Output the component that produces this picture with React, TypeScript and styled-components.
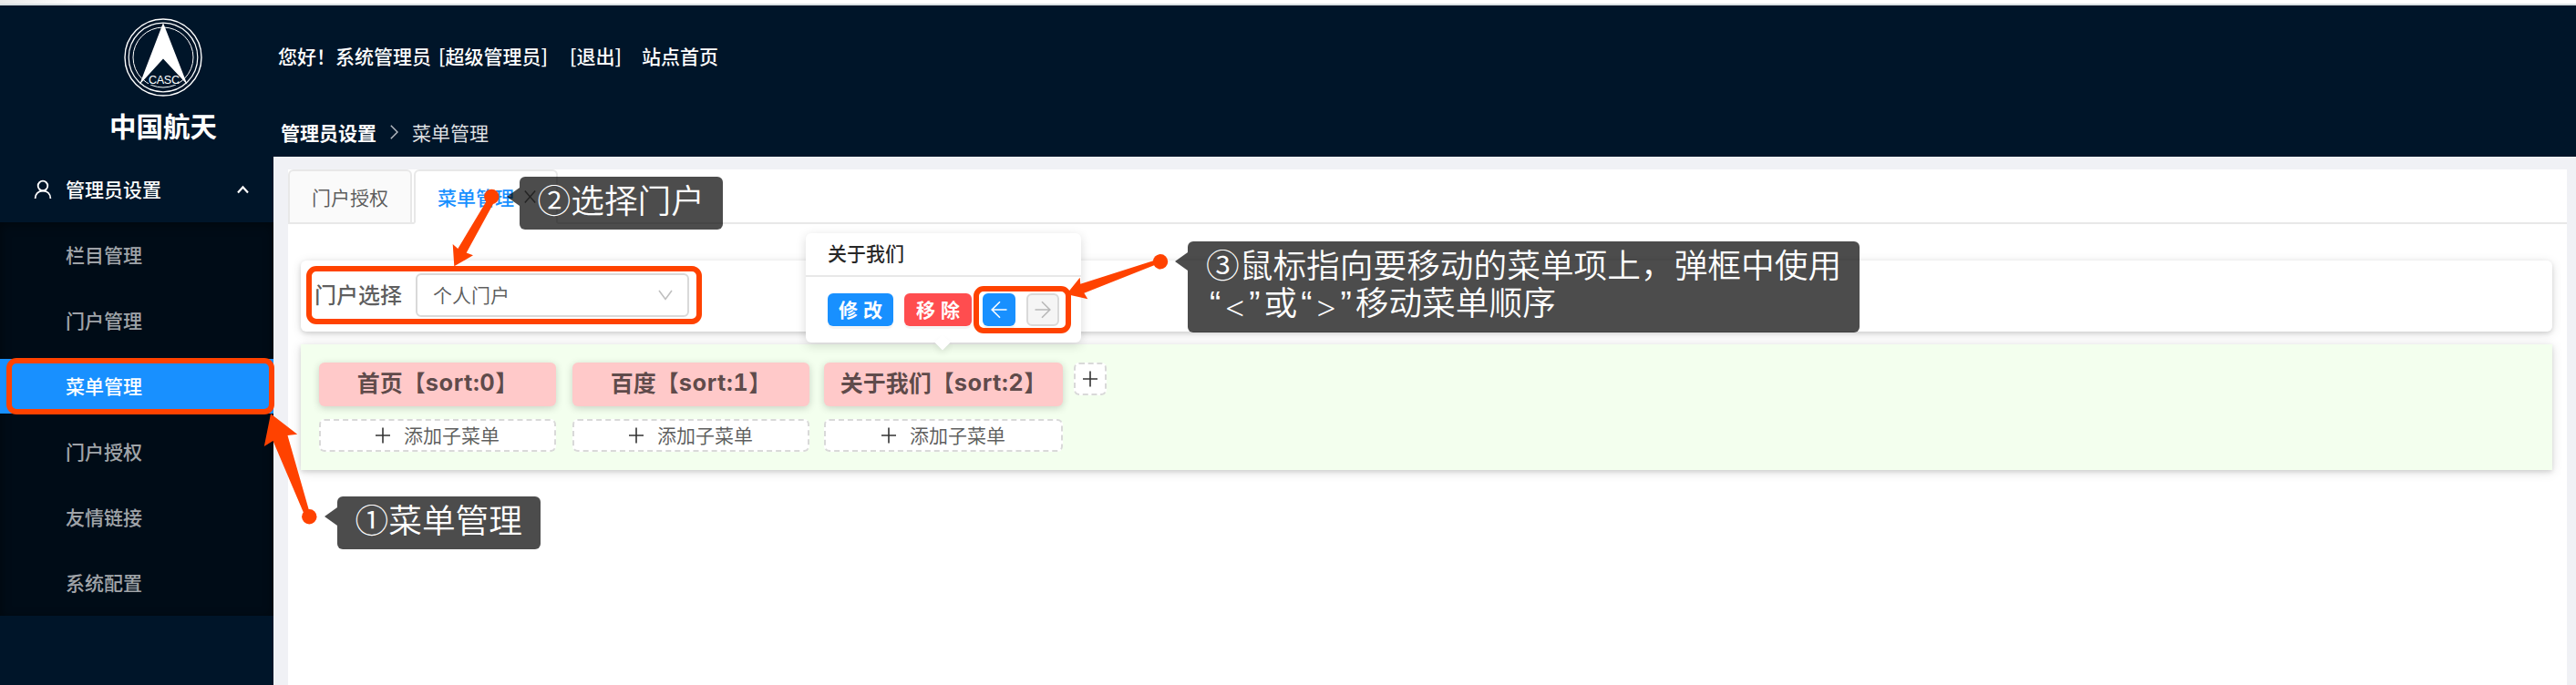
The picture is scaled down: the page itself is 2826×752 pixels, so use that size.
import React from 'react';
import styled, { createGlobalStyle, css } from 'styled-components';

const ACCENT = '#ff4200';
const BLUE = '#1890ff';

const GlobalStyle = createGlobalStyle`
  * { box-sizing: border-box; }
  body {
    margin: 0;
    background: #f0f1f5;
    font-family: "Noto Sans CJK SC", "Liberation Sans", sans-serif;
    font-size: 21px;
    color: rgba(0, 0, 0, 0.65);
    overflow: hidden;
  }
`;

const Page = styled.div`
  position: relative;
  width: 2826px;
  height: 752px;
  display: flex;
  flex-direction: column;
  overflow: hidden;
`;

const WindowEdge = styled.div`
  flex: none;
  height: 6px;
  background: linear-gradient(90deg, #e9e9e9, #fff 90px);
  border-bottom: 2px solid #d9dfe2;
`;

const Shell = styled.div`
  flex: 1;
  display: flex;
  min-height: 0;
`;

const Sidebar = styled.aside`
  flex: none;
  width: 300px;
  background: #001529;
  color: #fff;
`;

const Brand = styled.div`
  height: 166px;
  padding: 14px 0 0 58px;
  display: flex;
  flex-direction: column;
  align-items: center;
`;

const LogoSvg = styled.svg`
  display: block;
  width: 86px;
  height: 86px;
`;

const BrandName = styled.div`
  margin-top: 9px;
  font-size: 29.5px;
  line-height: 44px;
  font-weight: 700;
`;

const GroupTitle = styled.div`
  height: 72px;
  padding: 0 27px 0 37px;
  display: flex;
  align-items: center;
  font-weight: 500;
  svg { display: block; }
`;

const GroupLabel = styled.span`
  flex: 1;
  margin-left: 15px;
  padding-bottom: 2px;
  line-height: 32px;
`;

const SubMenu = styled.nav`
  padding: 6px 0;
  display: flex;
  flex-direction: column;
  gap: 12px;
  background: #000c17;
  box-shadow: inset 0 3px 12px rgba(0, 0, 0, 0.45);
`;

const SubItem = styled.a<{ $active?: boolean }>`
  height: 60px;
  padding-left: 72px;
  line-height: 58px;
  font-weight: 500;
  color: rgba(255, 255, 255, 0.65);
  ${(p) => p.$active && css`background: ${BLUE}; color: #fff;`}
`;

const Main = styled.div`
  flex: 1;
  min-width: 0;
  display: flex;
  flex-direction: column;
`;

const Header = styled.header`
  flex: none;
  height: 166px;
  background: #001529;
  color: #fff;
  padding: 38px 0 0 5px;
`;

const UserBar = styled.div`
  height: 34px;
  display: flex;
  line-height: 34px;
  font-weight: 500;
`;

const UserText = styled.span<{ $gap?: number }>`
  margin-left: ${(p) => p.$gap ?? 0}px;
  white-space: pre;
`;

const Breadcrumb = styled.div`
  margin-top: 50px;
  padding-left: 3px;
  height: 34px;
  display: flex;
  align-items: center;
  line-height: 34px;
`;

const Crumb = styled.span<{ $current?: boolean }>`
  font-weight: ${(p) => (p.$current ? 400 : 700)};
  color: ${(p) => (p.$current ? 'rgba(255,255,255,.88)' : '#fff')};
`;

const CrumbSeparator = styled.svg`
  margin: 0 15px 0 15px;
`;

const Panel = styled.main`
  flex: 1;
  margin: 14px 10px 0 16px;
  background: #fff;
`;

const Tabs = styled.div`
  height: 60px;
  display: flex;
  align-items: stretch;
`;

const Tab = styled.div<{ $active?: boolean }>`
  width: ${(p) => (p.$active ? 158 : 136)}px;
  padding: 0 0 1px 24px;
  display: flex;
  align-items: center;
  gap: 11px;
  line-height: 32px;
  border: 2px solid #e8e8e8;
  border-radius: 6px 6px 0 0;
  background: ${(p) => (p.$active ? '#fff' : '#fafafa')};
  ${(p) => p.$active && css`
    border-bottom-color: #fff;
    color: ${BLUE};
    font-weight: 500;
  `}
`;

const TabRail = styled.div<{ $fill?: boolean }>`
  ${(p) => (p.$fill ? 'flex: 1' : 'width: 2px')};
  border-bottom: 2px solid #e8e8e8;
`;

const TabBody = styled.div`
  padding: 40px 16px 0 14px;
  display: flex;
  flex-direction: column;
  gap: 14px;
`;

const FilterCard = styled.section`
  height: 78px;
  padding-left: 15px;
  display: flex;
  align-items: center;
  border-radius: 6px;
  box-shadow: 0 2px 12px rgba(0, 0, 0, 0.12), 0 2px 5px rgba(0, 0, 0, 0.12);
`;

const FilterLabel = styled.label`
  width: 111px;
  padding-bottom: 4px;
  font-size: 24px;
  line-height: 36px;
  font-weight: 500;
`;

const Select = styled.div`
  width: 300px;
  height: 48px;
  margin-top: -2px;
  padding: 0 16px;
  display: flex;
  align-items: center;
  justify-content: space-between;
  line-height: 32px;
  border: 2px solid #d9d9d9;
  border-radius: 6px;
`;

const SelectValue = styled.span`
  padding: 0 0 2px 1px;
`;

const MenuBoard = styled.section`
  height: 138px;
  padding: 20px;
  display: flex;
  align-items: flex-start;
  background: #f3ffee;
  box-shadow: 0 2px 12px rgba(0, 0, 0, 0.12), 0 2px 5px rgba(0, 0, 0, 0.12);
`;

const MenuColumn = styled.div<{ $width: number; $gap: number }>`
  width: ${(p) => p.$width}px;
  margin-right: ${(p) => p.$gap}px;
  display: flex;
  flex-direction: column;
  gap: 14px;
`;

const MenuHead = styled.div`
  height: 48px;
  display: flex;
  justify-content: center;
  font-size: 25px;
  line-height: 43px;
  font-weight: 700;
  color: rgba(0, 0, 0, 0.65);
  white-space: nowrap;
  border-radius: 6px;
  background: #ffc9c9;
  box-shadow: 0 2px 8px rgba(0, 0, 0, 0.18);
`;

const Sort = styled.span`
  font-family: Inter, sans-serif;
  font-size: 25.5px;
  letter-spacing: 0.5px;
  font-variant-numeric: tabular-nums;
`;

const DashedButton = styled.button<{ $square?: boolean }>`
  height: 36px;
  width: ${(p) => (p.$square ? '36px' : '100%')};
  padding: 0 0 1px;
  display: flex;
  align-items: center;
  justify-content: center;
  gap: 15px;
  font: inherit;
  line-height: 30px;
  color: rgba(0, 0, 0, 0.65);
  border: 2px dashed #d9d9d9;
  border-radius: 6px;
  background: #fff;
`;

const ButtonLabel = styled.span`
  height: 32px;
`;

const Popover = styled.div`
  position: absolute;
  left: 884px;
  top: 256px;
  width: 302px;
  height: 120px;
  border-radius: 6px;
  background: #fff;
  box-shadow: 0 3px 12px rgba(0, 0, 0, 0.15);
  &::after {
    content: "";
    position: absolute;
    left: 144px;
    top: 114px;
    width: 12px;
    height: 12px;
    transform: rotate(45deg);
    background: #fff;
    box-shadow: 3px 3px 7px rgba(0, 0, 0, 0.07);
  }
`;

const PopoverTitle = styled.div`
  height: 48px;
  padding-left: 24px;
  line-height: 43px;
  font-weight: 500;
  color: rgba(0, 0, 0, 0.85);
  border-bottom: 2px solid #e8e8e8;
`;

const PopoverActions = styled.div`
  padding: 18px 24px;
  display: flex;
  gap: 12px;
`;

const ActionButton = styled.button<{ $tone: 'primary' | 'danger' | 'disabled'; $width: number }>`
  width: ${(p) => p.$width}px;
  height: 36px;
  padding: 0;
  display: flex;
  align-items: center;
  justify-content: center;
  gap: 6px;
  font: inherit;
  font-weight: 700;
  line-height: 34px;
  border: 0;
  border-radius: 6px;
  color: #fff;
  background: ${(p) => (p.$tone === 'danger' ? '#ff4d4f' : BLUE)};
  box-shadow: 0 3px 0 rgba(0, 0, 0, 0.04);
  span { height: 36px; }
  ${(p) => p.$tone === 'disabled' && css`
    color: rgba(0, 0, 0, 0.25);
    background: #f5f5f5;
    border: 2px solid #d9d9d9;
    box-shadow: none;
  `}
`;

const Marker = styled.div<{ $x: number; $y: number; $w: number; $h: number }>`
  position: absolute;
  left: ${(p) => p.$x}px;
  top: ${(p) => p.$y}px;
  width: ${(p) => p.$w}px;
  height: ${(p) => p.$h}px;
  border: 6px solid ${ACCENT};
  border-radius: 11px;
`;

const ArrowLayer = styled.svg`
  position: absolute;
  left: 0;
  top: 0;
  pointer-events: none;
`;

const Callout = styled.div<{ $x: number; $y: number; $w: number; $h: number }>`
  position: absolute;
  left: ${(p) => p.$x}px;
  top: ${(p) => p.$y}px;
  width: ${(p) => p.$w}px;
  height: ${(p) => p.$h}px;
  padding: 4px 0 0 20px;
  font-size: 36.7px;
  line-height: 41px;
  font-weight: 350;
  white-space: nowrap;
  color: #fff;
  border-radius: 6px;
  background: rgba(0, 0, 0, 0.7);
  &::before {
    content: "";
    position: absolute;
    right: 100%;
    top: 12px;
    border: solid transparent;
    border-width: 10px 14px 10px 0;
    border-right-color: rgba(0, 0, 0, 0.7);
  }
`;

const Quoted = styled.span`
  display: inline-flex;
  justify-content: center;
  gap: 5px;
  width: 63.5px;
  font-family: "Noto Sans", sans-serif;
  line-height: 36px;
`;

const QuoteMark = styled.span`
  margin-top: -3px;
  font-family: "Liberation Sans", sans-serif;
`;

const QuotedSign = styled.span`
  padding-top: 1px;
`;

const Logo = () => (
  <LogoSvg viewBox="0 0 86 86" fill="none" stroke="#fff">
    <circle cx="43" cy="43" r="42" strokeWidth="1.4" />
    <circle cx="43" cy="43" r="37.8" strokeWidth="1.2" />
    <circle cx="43" cy="43" r="33" strokeWidth="1" />
    <rect x="27" y="61" width="32" height="12" fill="#001529" stroke="none" />
    <path d="M43 5 L69.500 73 L43 44.500 L17 73 Z" fill="#fff" stroke="none" />
    <text x="27" y="72" fill="#fff" stroke="none" fontSize="12.600" textLength="34" fontFamily="Liberation Sans, sans-serif">CASC</text>
  </LogoSvg>
);

const UserIcon = () => (
  <svg width="20" height="22" viewBox="0 0 20 22" fill="none" stroke="#fff" strokeWidth="1.800">
    <circle cx="10" cy="7" r="5.300" />
    <path d="M1.600 21 C1.600 15.800 5 12.500 10 12.500 C15 12.500 18.400 15.800 18.400 21" />
  </svg>
);

const CaretUp = () => (
  <svg width="13" height="10" viewBox="0 0 13 10" fill="none" stroke="#fff" strokeWidth="2.200">
    <path d="M1 8.500 L6.500 2.500 L12 8.500" />
  </svg>
);

const PlusIcon = () => (
  <svg width="16" height="18" viewBox="0 0 16 18" stroke="#333" strokeWidth="1.600">
    <path d="M0 9 H16 M8 0.500 V17.500" />
  </svg>
);

const MoveIcon = ({ right }: { right?: boolean }) => (
  <svg width="18" height="20" viewBox="0 0 18 20" fill="none" stroke="currentColor" strokeWidth="1.600">
    <path d={right ? 'M0.500 10 H16.500 M8 1.200 L16.800 10 L8 18.800' : 'M17.500 10 H1.500 M10 1.200 L1.200 10 L10 18.800'} />
  </svg>
);

const QuotedKey = ({ sign }: { sign: string }) => (
  <Quoted>
    <QuoteMark>“</QuoteMark>
    <QuotedSign>{sign}</QuotedSign>
    <QuoteMark>”</QuoteMark>
  </Quoted>
);

const sideItems = ['栏目管理', '门户管理', '菜单管理', '门户授权', '友情链接', '系统配置'];

const menus = [
  { name: '首页', sort: 0, width: 260, gap: 18 },
  { name: '百度', sort: 1, width: 260, gap: 16 },
  { name: '关于我们', sort: 2, width: 262, gap: 12 },
];

export default function App() {
  return (
    <Page>
      <GlobalStyle />
      <WindowEdge />
      <Shell>
        <Sidebar>
          <Brand>
            <Logo />
            <BrandName>中国航天</BrandName>
          </Brand>
          <GroupTitle>
            <UserIcon />
            <GroupLabel>管理员设置</GroupLabel>
            <CaretUp />
          </GroupTitle>
          <SubMenu>
            {sideItems.map((label) => (
              <SubItem key={label} $active={label === '菜单管理'}>{label}</SubItem>
            ))}
          </SubMenu>
        </Sidebar>
        <Main>
          <Header>
            <UserBar>
              <UserText>您好！系统管理员</UserText>
              <UserText $gap={8}>[超级管理员]</UserText>
              <UserText $gap={24}>[退出]</UserText>
              <UserText $gap={22}>站点首页</UserText>
            </UserBar>
            <Breadcrumb>
              <Crumb>管理员设置</Crumb>
              <CrumbSeparator width="9" height="16" viewBox="0 0 9 16" fill="none" stroke="#b8bec5" strokeWidth="1.400">
                <path d="M0.800 0.800 L8 8 L0.800 15.200" />
              </CrumbSeparator>
              <Crumb $current>菜单管理</Crumb>
            </Breadcrumb>
          </Header>
          <Panel>
            <Tabs>
              <Tab>门户授权</Tab>
              <TabRail />
              <Tab $active>
                菜单管理
                <svg width="13" height="14" viewBox="0 0 13 14" stroke="#777" strokeWidth="1.500">
                  <path d="M0.800 0.500 L12.200 13.500 M12.200 0.500 L0.800 13.500" />
                </svg>
              </Tab>
              <TabRail $fill />
            </Tabs>
            <TabBody>
              <FilterCard>
                <FilterLabel>门户选择</FilterLabel>
                <Select>
                  <SelectValue>个人门户</SelectValue>
                  <svg width="16" height="12" viewBox="0 0 16 12" fill="none" stroke="#bfbfbf" strokeWidth="1.600">
                    <path d="M1 1 L8 10.500 L15 1" />
                  </svg>
                </Select>
              </FilterCard>
              <MenuBoard>
                {menus.map((m) => (
                  <MenuColumn key={m.name} $width={m.width} $gap={m.gap}>
                    <MenuHead>{m.name}【<Sort>sort:{m.sort}</Sort>】</MenuHead>
                    <DashedButton><PlusIcon /><ButtonLabel>添加子菜单</ButtonLabel></DashedButton>
                  </MenuColumn>
                ))}
                <DashedButton $square><PlusIcon /></DashedButton>
              </MenuBoard>
            </TabBody>
          </Panel>
        </Main>
      </Shell>

      <Popover>
        <PopoverTitle>关于我们</PopoverTitle>
        <PopoverActions>
          <ActionButton $tone="primary" $width={72}><span>修</span><span>改</span></ActionButton>
          <ActionButton $tone="danger" $width={74}><span>移</span><span>除</span></ActionButton>
          <ActionButton $tone="primary" $width={36}><MoveIcon /></ActionButton>
          <ActionButton $tone="disabled" $width={36}><MoveIcon right /></ActionButton>
        </PopoverActions>
      </Popover>

      <Marker $x={7} $y={393} $w={293.500} $h={62} />
      <Marker $x={336} $y={292} $w={434} $h={64} />
      <Marker $x={1068} $y={314} $w={107} $h={52} />

      <Callout $x={369.500} $y={545.300} $w={223.200} $h={58.200}>①菜单管理</Callout>
      <Callout $x={569.500} $y={194} $w={223.200} $h={58}>②选择门户</Callout>
      <Callout $x={1303} $y={265.300} $w={737} $h={100}>
        ③鼠标指向要移动的菜单项上，弹框中使用
        <br />
        <QuotedKey sign="<" />或<QuotedKey sign=">" />移动菜单顺序
      </Callout>

      <ArrowLayer width="1400" height="640" viewBox="0 0 1400 640" fill={ACCENT}>
        <circle cx="339.300" cy="567.300" r="8.200" />
        <path d="M297 454.300 L326.200 476.700 L315.500 478 L339.500 562 L333.500 564 L299.500 484 L289.800 490 Z" />
        <circle cx="539.300" cy="216" r="8.200" />
        <path d="M498.300 292.300 L496.700 268 L502.300 273 L533.500 221 L541.500 223 L511.700 277.500 L519 280.300 Z" />
        <circle cx="1273" cy="287.300" r="8.200" />
        <path d="M1170 323 L1184.700 304.700 L1185.300 311.700 L1266 286 L1268 290.500 L1189.300 321.700 L1193.300 328.300 Z" />
      </ArrowLayer>
    </Page>
  );
}
